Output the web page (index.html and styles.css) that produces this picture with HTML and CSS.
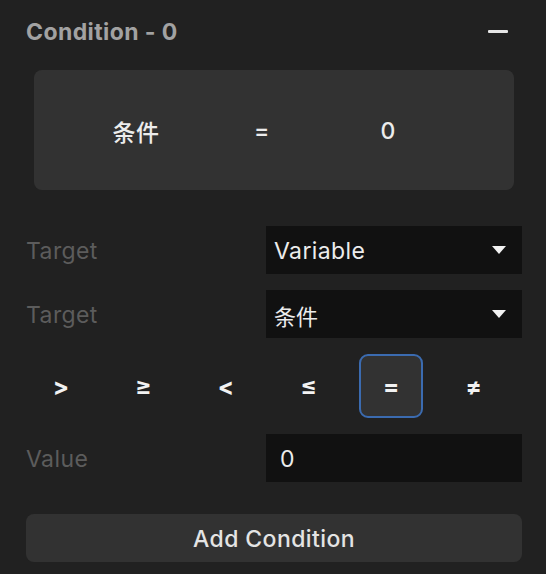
FILE: index.html
```html
<!DOCTYPE html>
<html>
<head>
<meta charset="utf-8">
<link rel="stylesheet" href="styles.css">
</head>
<body>
<div class="panel">
  <div class="header">
    <span class="title">Condition - 0</span>
    <span class="collapse"></span>
  </div>
  <div class="summary">
    <span class="sum-item">条件</span>
    <span class="sum-item">=</span>
    <span class="sum-item">0</span>
  </div>
  <div class="row first">
    <span class="label">Target</span>
    <div class="field select">
      <span class="text">Variable</span>
      <svg class="arrow" width="14" height="8" viewBox="0 0 14 8"><path d="M0 0 L14 0 L7 8 Z" fill="#f2f2f2"/></svg>
    </div>
  </div>
  <div class="row">
    <span class="label">Target</span>
    <div class="field select">
      <span class="text cjk">条件</span>
      <svg class="arrow" width="14" height="8" viewBox="0 0 14 8"><path d="M0 0 L14 0 L7 8 Z" fill="#f2f2f2"/></svg>
    </div>
  </div>
  <div class="ops">
    <div class="op">&gt;</div>
    <div class="op">≥</div>
    <div class="op">&lt;</div>
    <div class="op">≤</div>
    <div class="op active">=</div>
    <div class="op">≠</div>
  </div>
  <div class="row">
    <span class="label">Value</span>
    <div class="field input"><span class="text">0</span></div>
  </div>
  <div class="add"><span class="text">Add Condition</span></div>
</div>
</body>
</html>
```
FILE: styles.css
```css
html, body {
  margin: 0;
  padding: 0;
  background: #212121;
}
body {
  width: 546px;
  height: 574px;
  overflow: hidden;
  font-family: Inter, "Noto Sans CJK SC", sans-serif;
  font-size: 23px;
  letter-spacing: 0.4px;
  color: #ececec;
}
.panel {
  padding: 19px 24px 0 26px;
  display: flex;
  flex-direction: column;
}
.header {
  height: 24px;
  display: flex;
  align-items: center;
  justify-content: space-between;
}
.title {
  font-weight: 700;
  font-size: 23px;
  color: #a2a2a2;
  padding-top: 2px;
}
.collapse {
  width: 20px;
  height: 3px;
  background: #e6e6e6;
  border-radius: 1px;
  margin-right: 14px;
}
.summary {
  margin: 27px 8px 0 8px;
  height: 120px;
  background: #323232;
  border-radius: 8px;
  display: grid;
  grid-template-columns: repeat(3, 126px);
  padding-left: 39px;
  align-items: center;
}
.sum-item {
  text-align: center;
  font-weight: 500;
  padding-top: 2px;
}
.cjk {
  font-size: 22px;
  letter-spacing: 0;
}
.text {
  padding-top: 2px;
}
.row {
  display: flex;
  align-items: center;
  margin-top: 16px;
}
.row.first {
  margin-top: 36px;
}
.label {
  flex: 1;
  color: #5c5c5c;
  padding-top: 2px;
}
.field {
  width: 256px;
  height: 48px;
  background: #111111;
  box-sizing: border-box;
  display: flex;
  align-items: center;
}
.select {
  padding: 0 16px 0 8px;
  justify-content: space-between;
}
.input {
  padding-left: 14px;
}
.ops {
  margin-top: 16px;
  display: flex;
  justify-content: space-between;
  padding: 0 16px 0 3px;
}
.op {
  width: 64px;
  height: 64px;
  box-sizing: border-box;
  display: flex;
  align-items: center;
  justify-content: center;
  font-weight: 700;
  font-size: 24px;
  color: #f2f2f2;
  border-radius: 9px;
  border: 2px solid transparent;
}
.op.active {
  background: #323232;
  border-color: #3b6bb0;
}
.add {
  margin-top: 32px;
  height: 48px;
  background: #323232;
  border-radius: 8px;
  display: flex;
  align-items: center;
  justify-content: center;
  font-weight: 500;
  color: #e4e4e4;
}
```
